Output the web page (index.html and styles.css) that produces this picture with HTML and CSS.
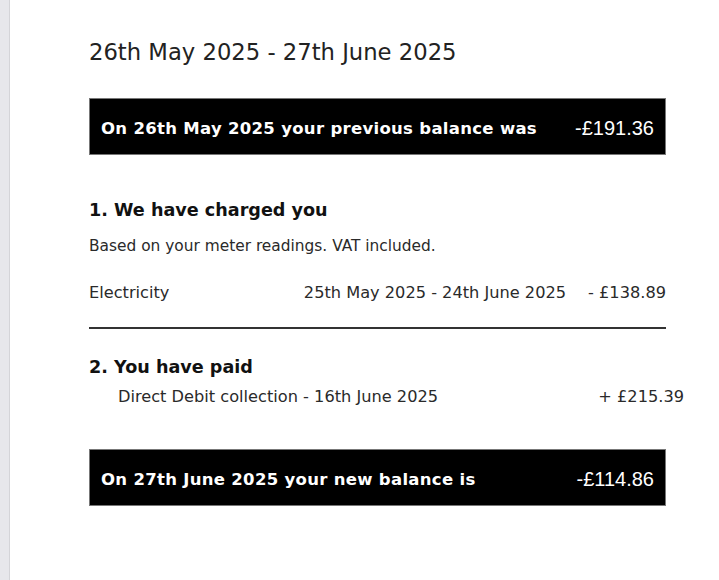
FILE: index.html
```html
<!DOCTYPE html>
<html>
<head>
<meta charset="utf-8">
<link rel="stylesheet" href="styles.css">
</head>
<body>
<div class="page">
  <div class="gutter"></div>
  <main class="sheet">
    <h1 class="period">26th May 2025 - 27th June 2025</h1>
    <div class="balance">
      <span class="balance-label">On 26th May 2025 your previous balance was</span>
      <span class="balance-amount">-£191.36</span>
    </div>
    <section class="charged">
      <h2 class="section-title">1. We have charged you</h2>
      <p class="note">Based on your meter readings. VAT included.</p>
      <div class="charge-row">
        <span class="charge-name">Electricity</span>
        <span class="charge-dates">25th May 2025 - 24th June 2025</span>
        <span class="charge-amount">- £138.89</span>
      </div>
    </section>
    <section class="paid">
      <h2 class="section-title">2. You have paid</h2>
      <div class="paid-row">
        <span>Direct Debit collection - 16th June 2025</span>
        <span>+ £215.39</span>
      </div>
    </section>
    <div class="balance balance-new">
      <span class="balance-label">On 27th June 2025 your new balance is</span>
      <span class="balance-amount">-£114.86</span>
    </div>
  </main>
</div>
</body>
</html>
```
FILE: styles.css
```css
* { box-sizing: border-box; }
html, body { margin: 0; padding: 0; background: #fff; }
body { font-family: "DejaVu Sans", "Noto Sans", sans-serif; color: #2a2a2a; }
.page { display: flex; min-height: 580px; }
.gutter { width: 10px; background: #e7e7eb; border-right: 1px solid #d4d4d8; flex: none; }
.sheet { width: 577px; margin-left: 79px; padding-top: 35px; }
.period { margin: 0; font-size: 22.7px; font-weight: 400; line-height: 34px; color: #222; }
.balance { margin-top: 29px; height: 57px; background: #000; border: 1px solid #777; display: flex; align-items: center; justify-content: space-between; padding: 3px 11px 0; color: #fff; }
.balance-label { font-weight: 700; font-size: 16.5px; letter-spacing: 0.3px; }
.balance-amount { font-family: "Liberation Sans", Arial, sans-serif; font-size: 20px; }
.charged { padding-top: 43px; border-bottom: 2px solid #333; padding-bottom: 23px; }
.section-title { margin: 0; font-size: 17.6px; font-weight: 700; line-height: 24px; color: #111; }
.note { margin: 14px 0 0; font-size: 15.4px; line-height: 20px; }
.charge-row { display: flex; margin-top: 26px; font-size: 16.2px; line-height: 22px; }
.charge-name { flex: 1; }
.charge-dates { margin-right: 22px; }
.paid { padding-top: 26px; }
.paid-row { display: flex; justify-content: space-between; margin: 7px -18px 0 29px; font-size: 16.2px; line-height: 22px; }
.balance-new { margin-top: 41px; }
```
